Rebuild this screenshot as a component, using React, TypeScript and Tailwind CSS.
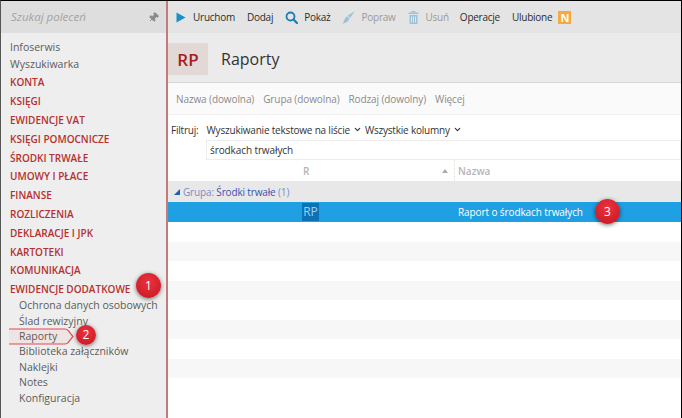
import React from 'react';
import { ChevronDown, Pin } from 'lucide-react';

const font = "font-['Open_Sans','Noto_Sans',sans-serif]";

const topItems = ['Infoserwis', 'Wyszukiwarka'];
const sections = [
  'KONTA',
  'KSIĘGI',
  'EWIDENCJE VAT',
  'KSIĘGI POMOCNICZE',
  'ŚRODKI TRWAŁE',
  'UMOWY I PŁACE',
  'FINANSE',
  'ROZLICZENIA',
  'DEKLARACJE I JPK',
  'KARTOTEKI',
  'KOMUNIKACJA',
];
const subItems = ['Ochrona danych osobowych', 'Ślad rewizyjny', 'Raporty', 'Biblioteka załączników', 'Naklejki', 'Notes', 'Konfiguracja'];

const Badge: React.FC<{ n: number; className: string }> = ({ n, className }) => (
  <div className={`absolute rounded-full bg-[radial-gradient(circle_at_50%_35%,#e8343f,#c9141f)] text-white text-[12px] flex items-center justify-center shadow-[0_1px_4px_rgba(0,0,0,0.55)] ${className}`}>
    {n}
  </div>
);

const App: React.FC = () => {
  return (
    <div className={`relative w-[682px] h-[418px] overflow-hidden bg-white flex border-t border-l border-r border-t-black border-l-[#555] border-r-black ${font} text-[10px] leading-none`}>
      <aside className="w-[165px] shrink-0 h-full bg-[#eeeeee] flex flex-col border-r-2 border-[#c77a7a] box-content">
        <div className="h-[32px] bg-[#dedede] flex items-center justify-between pl-[10px] pr-[7px] shrink-0">
          <span className="italic text-[#a3a3a3] text-[11.5px]">Szukaj poleceń</span>
          <Pin size={11} className="text-[#8a8a8a] rotate-45" fill="#8a8a8a" />
        </div>
        <div className="pl-[9px] pt-[5px] flex flex-col text-[10.5px]">
          {topItems.map((t) => (
            <div key={t} className="h-[17.5px] flex items-center text-[#5c5c5c]">{t}</div>
          ))}
          {sections.map((t) => (
            <div key={t} className="h-[18.8px] flex items-center font-semibold text-[#b5302f] text-[10px]">{t}</div>
          ))}
          <div className="h-[18px] flex items-center font-semibold text-[#b5302f] text-[10px]">EWIDENCJE DODATKOWE</div>
          <div className="pl-[9px] flex flex-col">
            {subItems.map((t) => (
              <div key={t} className="h-[15.4px] flex items-center text-[#5c5c5c]">{t}</div>
            ))}
          </div>
        </div>
      </aside>

      <main className="flex-1 min-w-0 flex flex-col">
        <div className="h-[32px] shrink-0 bg-[#e4e4e4] flex items-center pl-[8px] text-[#2c2c2c] tracking-[-0.25px]">
          <svg width="10" height="11" viewBox="0 0 10 11" className="mr-[7px]"><path d="M0.5 0.5 L9.5 5.5 L0.5 10.5 Z" fill="#1a8fc9" /></svg>
          <span className="mr-[12px]">Uruchom</span>
          <span className="mr-[12px]">Dodaj</span>
          <svg width="13" height="13" viewBox="0 0 13 13" fill="none" className="mr-[6px]">
            <circle cx="5.5" cy="5.5" r="4" stroke="#1a7fb5" strokeWidth="1.8" />
            <path d="M8.5 8.5 L12 12" stroke="#1a7fb5" strokeWidth="2.2" strokeLinecap="round" />
          </svg>
          <span className="mr-[12px]">Pokaż</span>
          <svg width="13" height="13" viewBox="0 0 13 13" className="mr-[6px]">
            <path d="M12.8 0.2 L5.6 4.6 L8 7 Z" fill="#9cc3d8" />
            <path d="M5 5.2 L7.4 7.6 C6.8 10.4 4 12.2 0.2 12.8 C2.4 10.8 2.2 6.8 5 5.2 Z" fill="#9cc3d8" />
          </svg>
          <span className="mr-[12px] text-[#9a9a9a]">Popraw</span>
          <svg width="11" height="13" viewBox="0 0 11 13" className="mr-[7px]">
            <rect x="0.5" y="1.5" width="10" height="1.5" fill="#9cc3d8" />
            <rect x="3.5" y="0" width="4" height="1.5" fill="#9cc3d8" />
            <path d="M1.5 4 H9.5 V13 H1.5 Z M3 5.5 V11.5 H4 V5.5 Z M5 5.5 V11.5 H6 V5.5 Z M7 5.5 V11.5 H8 V5.5 Z" fill="#9cc3d8" fillRule="evenodd" />
          </svg>
          <span className="mr-[11px] text-[#9a9a9a]">Usuń</span>
          <span className="mr-[12px]">Operacje</span>
          <span className="mr-[6px]">Ulubione</span>
          <span className="w-[13px] h-[13px] bg-[#f7a941] text-white font-bold text-[11px] flex items-center justify-center">N</span>
        </div>

        <div className="h-[50px] shrink-0 bg-[#ebebeb] border-b border-[#d8d8d8] flex items-start pt-[10px]">
          <div className="w-[40px] h-[32px] bg-[#e2d8d6] text-[#a31f1f] text-[17px] font-semibold flex items-center justify-center">RP</div>
          <div className="ml-[13px] h-[32px] flex items-center text-[16px] text-[#333]">Raporty</div>
        </div>

        <div className="h-[32px] shrink-0 bg-[#fafafa] border-b border-[#f0f0f0] flex items-center pl-[8px] gap-[9px] text-[#8a8a8a] tracking-[-0.1px]">
          <span>Nazwa (dowolna)</span>
          <span>Grupa (dowolna)</span>
          <span>Rodzaj (dowolny)</span>
          <span>Więcej</span>
        </div>

        <div className="flex items-center pl-[3px] pt-[7px] h-[22px] shrink-0 text-[#333] tracking-[-0.2px]">
          <span className="mr-[8px]">Filtruj:</span>
          <span>Wyszukiwanie tekstowe na liście</span>
          <ChevronDown size={9} strokeWidth={3} className="ml-[3px] mr-[3px]" />
          <span>Wszystkie kolumny</span>
          <ChevronDown size={9} strokeWidth={3} className="ml-[3px]" />
        </div>
        <div className="ml-[38px] mt-[3px] h-[20px] shrink-0 border border-[#ececec] bg-white flex items-center pl-[3px] text-[#333] tracking-[-0.1px]">środkach trwałych</div>

        <div className="h-[21px] shrink-0 flex items-center text-[#b5b5b5] font-semibold relative">
          <div className="w-[287px] pl-[135px] h-full flex items-center border-r border-dotted border-[#ddd] relative">
            R
            <svg width="6" height="4" viewBox="0 0 6 4" className="absolute right-[6px] top-[9px]"><path d="M3 0 L6 4 H0 Z" fill="#aaa" /></svg>
          </div>
          <span className="pl-[3px]">Nazwa</span>
        </div>

        <div className="h-[21px] shrink-0 bg-[#e8e8e8] flex items-center pl-[6px] text-[#5a6fc0] tracking-[-0.15px]">
          <svg width="6" height="6" viewBox="0 0 6 6" className="mr-[3px]"><path d="M6 0 V6 H0 Z" fill="#1f5fb0" /></svg>
          <span className="text-[#7b8cc9]">Grupa:&nbsp;</span>
          <span className="text-[#3b52b0]">Środki trwałe</span>
          <span className="text-[#7b8cc9]">&nbsp;(1)</span>
        </div>

        <div className="h-[20px] shrink-0 bg-[#1fa0e2] flex items-center text-white relative">
          <div className="w-[290px] pl-[134px] h-full flex items-center">
            <span className="w-[17px] h-[18px] bg-[#0b72b5] text-[#9fd0ee] text-[12px] flex items-center justify-center">RP</span>
          </div>
          <span className="font-medium tracking-[-0.1px]">Raport o środkach trwałych</span>
        </div>

        <div className="flex-1 flex flex-col">
          <div className="h-[20px] shrink-0 bg-white" />
          <div className="h-[19px] shrink-0 bg-[#f7f7f7]" />
          <div className="h-[20px] shrink-0 bg-white" />
          <div className="h-[19px] shrink-0 bg-[#f7f7f7]" />
          <div className="h-[20px] shrink-0 bg-white" />
          <div className="h-[19px] shrink-0 bg-[#f7f7f7]" />
          <div className="h-[20px] shrink-0 bg-white" />
          <div className="h-[19px] shrink-0 bg-[#f7f7f7]" />
          <div className="h-[20px] shrink-0 bg-white" />
        </div>
      </main>

      <svg width="70" height="20" viewBox="0 0 70 20" fill="none" className="absolute left-[6px] top-[326px]">
        <path d="M2 2 H58 Q60 2 61 3.5 L66 9.5 L61 15.5 Q60 17 58 17 H2 Z" fill="#e8474c" fillOpacity="0.06" />
        <path d="M2 2 H58 Q60 2 61 3.5 L66 9.5 L61 15.5 Q60 17 58 17 H2" stroke="#e8474c" strokeWidth="1.2" />
      </svg>
      <Badge n={1} className="left-[135px] top-[272px] w-[25px] h-[25px]" />
      <Badge n={2} className="left-[75px] top-[324px] w-[20px] h-[20px]" />
      <Badge n={3} className="left-[594px] top-[198px] w-[25px] h-[25px]" />
    </div>
  );
};

export default App;
